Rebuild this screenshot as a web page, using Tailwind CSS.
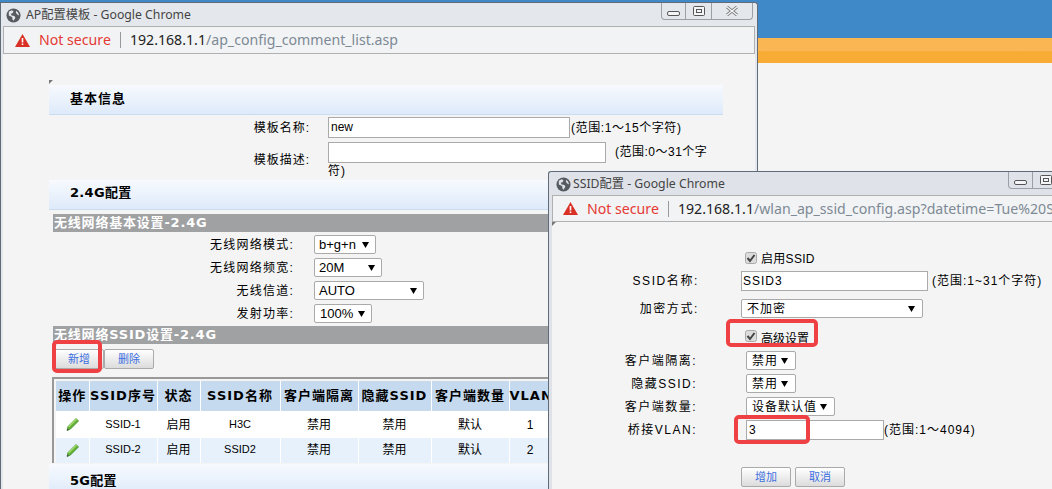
<!DOCTYPE html>
<html lang="zh">
<head>
  <meta charset="UTF-8">
  <title>AP配置模板</title>
  <script src="https://cdn.jsdelivr.net/npm/@tailwindcss/browser@4"></script>
</head>
<body class="relative w-[1052px] h-[489px] overflow-hidden bg-[#f4f4f4] text-[12px] text-black font-['Liberation_Sans','Noto_Sans_CJK_SC',sans-serif]">
  <!-- Page behind the popups -->
  <div class="h-[38px] bg-[#3f89c9]"></div>
  <div class="h-[25px] bg-linear-to-b from-[#f9b652] from-50% to-[#f8ac35] to-55%"></div>

  <!-- AP template window -->
  <div class="absolute left-0 top-[2px] w-[758px] h-[487px] flex flex-col overflow-hidden bg-[#e4e8ec] border-t border-x border-[#5f6b76] rounded-tr-[3px]">
    <div class="h-[23px] shrink-0 flex items-center relative pl-[5px] pt-[2px]">
      <svg class="w-[15px] h-[15px]" viewBox="0 0 16 16"><circle cx="8" cy="8" r="7.5" fill="#555b60"/><path d="M3 4l3-1.5 2 1-1 2-2 .5 1 2 3 .5 1 2-2 3-1-1-.5-3L3 8z M11 3l2 2 1 3-2-1-1.5-2z" fill="#e4e8ec"/></svg>
      <span class="ml-[5px] font-['Noto_Sans','Noto_Sans_CJK_SC',sans-serif] text-[12.25px] text-[#444]">AP配置模板 - Google Chrome</span>
      <div class="absolute right-[4px] top-0 w-[92px] h-[17px] flex border-x border-b border-[#9aa0a6] rounded-b-[4px]">
        <div class="w-[24px] border-r border-[#9aa0a6] flex items-end justify-center pb-[3px]"><svg width="13" height="5" viewBox="0 0 13 5"><rect x="0.5" y="0.5" width="12" height="4" rx="1.5" fill="#f4f5f6" stroke="#555"/></svg></div>
        <div class="w-[26px] border-r border-[#9aa0a6] flex items-center justify-center"><svg width="12" height="10" viewBox="0 0 12 10"><rect x="0.5" y="0.5" width="11" height="9" rx="1" fill="#f4f5f6" stroke="#555"/><rect x="3.5" y="3.5" width="5" height="3" fill="none" stroke="#555"/></svg></div>
        <div class="flex-1 flex items-center justify-center"><svg width="12" height="10" viewBox="0 0 12 10"><path d="M1 1l10 8M11 1L1 9" stroke="#777" stroke-width="3"/><path d="M1 1l10 8M11 1L1 9" stroke="#f4f5f6" stroke-width="1.5"/></svg></div>
      </div>
    </div>
    <div class="mx-[2px] h-[28px] shrink-0 flex items-center bg-[#f2f3f4] border border-[#aeb0b2] font-['Noto_Sans',sans-serif] text-[14.15px]">
      <svg class="ml-[11px] w-[15px] h-[13px]" viewBox="0 0 15 13"><path d="M7.5 0L15 13H0z" fill="#d93025"/><path d="M6.7 4h1.6v4.5H6.7zM6.7 9.5h1.6V11H6.7z" fill="#fff"/></svg>
      <span class="ml-[9px] text-[#e53935]">Not secure</span>
      <span class="ml-[9px] mr-[9px] w-px h-[16px] bg-[#999]"></span>
      <span class="text-[#222]">192.168.1.1</span><span class="text-[#7d8a96]">/ap_config_comment_list.asp</span>
    </div>
    <div class="flex-1 mx-[2px] bg-[#f4f4f4] pl-[46px] overflow-hidden">
      <div class="mt-[26px] h-0 w-0 border-t-[4px] border-r-[4px] border-t-[#777] border-r-transparent"></div>
      <div class="mt-[1px] w-[674px]">
        <h2 class="h-[30px] flex items-center pl-[21px] pb-[2px] bg-linear-to-b from-[#f7fafe] to-[#deeafa] border-b border-[#c9dcf2] font-['DejaVu_Sans','Noto_Sans_CJK_SC',sans-serif] font-bold text-[13px] tracking-[1px]">基本信息</h2>

        <div class="mt-[2px] grid grid-cols-[261px_1fr] gap-x-[18px] gap-y-[4px] items-center tracking-[1px]">
          <div class="text-right">模板名称:</div>
          <div class="flex items-center">
            <div class="w-[242px] h-[21px] leading-[19px] px-[2px] bg-white border border-[#aaa] tracking-normal">new</div>
            <span class="ml-[1px] tracking-[0.6px]">(范围:1～15个字符)</span>
          </div>
          <div class="text-right pb-[2px]">模板描述:</div>
          <div class="h-[38px] leading-[17px]">
            <div class="flex items-center">
              <div class="w-[278px] h-[21px] bg-white border border-[#aaa]"></div>
              <span class="ml-[9px] tracking-[0.5px]">(范围:0～31个字</span>
            </div>
            <div>符)</div>
          </div>
        </div>

        <h2 class="h-[30px] flex items-center pl-[21px] pb-[3px] bg-linear-to-b from-[#f7fafe] to-[#deeafa] border-b border-[#c9dcf2] font-['DejaVu_Sans','Noto_Sans_CJK_SC',sans-serif] font-bold text-[13px] tracking-[0.3px]">2.4G配置</h2>
        <h3 class="mt-[4px] ml-[4px] h-[18px] leading-[18px] pl-[1px] bg-[#9fa1a3] text-white font-['DejaVu_Sans','Noto_Sans_CJK_SC',sans-serif] font-bold text-[13px] tracking-[0.8px]">无线网络基本设置-2.4G</h3>

        <div class="mt-[3px] grid grid-cols-[245px_1fr] gap-x-[20px] gap-y-[4px] items-center tracking-[1.25px]">
          <div class="text-right">无线网络模式:</div>
          <div class="w-[62px] h-[19px] flex items-center justify-between pl-[4px] pr-[6px] bg-white border border-[#aaa] rounded-[2px] text-[13px] tracking-normal">b+g+n<svg width="7" height="6" viewBox="0 0 7 6"><path d="M0 0h7L3.5 6z"/></svg></div>
          <div class="text-right">无线网络频宽:</div>
          <div class="w-[68px] h-[19px] flex items-center justify-between pl-[4px] pr-[6px] bg-white border border-[#aaa] rounded-[2px] text-[13px] tracking-normal">20M<svg width="7" height="6" viewBox="0 0 7 6"><path d="M0 0h7L3.5 6z"/></svg></div>
          <div class="text-right">无线信道:</div>
          <div class="w-[110px] h-[19px] flex items-center justify-between pl-[4px] pr-[6px] bg-white border border-[#aaa] rounded-[2px] text-[13px] tracking-normal">AUTO<svg width="7" height="6" viewBox="0 0 7 6"><path d="M0 0h7L3.5 6z"/></svg></div>
          <div class="text-right">发射功率:</div>
          <div class="w-[58px] h-[19px] flex items-center justify-between pl-[5px] pr-[6px] bg-white border border-[#aaa] rounded-[2px] text-[13px] tracking-normal">100%<svg width="7" height="6" viewBox="0 0 7 6"><path d="M0 0h7L3.5 6z"/></svg></div>
        </div>

        <h3 class="mt-[3px] ml-[4px] h-[18px] leading-[18px] pl-[1px] bg-[#9fa1a3] text-white font-['DejaVu_Sans','Noto_Sans_CJK_SC',sans-serif] font-bold text-[13px] tracking-[0.8px]">无线网络SSID设置-2.4G</h3>

        <div class="mt-[5px] ml-[5px] flex text-[11px] text-[#3b6fe0]">
          <button class="w-[50px] h-[20px] bg-linear-to-b from-white to-[#dcdcdc] border border-[#aaa] rounded-[2px]">新增</button>
          <button class="w-[50px] h-[20px] bg-linear-to-b from-white to-[#dcdcdc] border border-[#aaa] rounded-[2px]">删除</button>
        </div>

        <div class="mt-[8px] ml-[3px] border-t-2 border-l-2 border-[#999] pt-[2px] pl-[2px]">
          <table class="table-fixed w-[640px] border-collapse text-center">
            <colgroup>
              <col class="w-[33px]"><col class="w-[68px]"><col class="w-[43px]"><col class="w-[80px]"><col class="w-[78px]"><col class="w-[73px]"><col class="w-[78px]"><col class="w-[42px]"><col>
            </colgroup>
            <thead class="font-['DejaVu_Sans','Noto_Sans_CJK_SC',sans-serif] text-[13px] tracking-[1px] whitespace-nowrap">
              <tr class="h-[30px] bg-[#c5daee]">
                <th class="border-r border-white font-bold">操作</th><th class="border-r border-white font-bold">SSID序号</th><th class="border-r border-white font-bold">状态</th><th class="border-r border-white font-bold">SSID名称</th><th class="border-r border-white font-bold">客户端隔离</th><th class="border-r border-white font-bold">隐藏SSID</th><th class="border-r border-white font-bold">客户端数量</th><th class="border-r border-white font-bold">VLAN</th><th class="font-bold"></th>
              </tr>
            </thead>
            <tbody>
              <tr class="h-[27px] bg-white">
                <td class="border-r border-white"><svg class="mx-auto" width="15" height="15" viewBox="0 0 15 15"><path d="M11 1.5l2.5 2.5-8 8L2 13.5 3 9.5z" fill="#5fb135" stroke="#3c8a20" stroke-width=".7"/><path d="M3 9.5L11 1.5l1 1-8 8z" fill="#a5dc6e"/><path d="M2 13.5l.6-2 1.4 1.4z" fill="#444"/></svg></td>
                <td class="border-r border-white text-[11px]">SSID-1</td><td class="border-r border-white">启用</td><td class="border-r border-white text-[11px]">H3C</td><td class="border-r border-white">禁用</td><td class="border-r border-white">禁用</td><td class="border-r border-white">默认</td><td class="border-r border-white">1</td><td></td>
              </tr>
              <tr class="h-[25px] bg-[#e6f1fb]">
                <td class="border-r border-white"><svg class="mx-auto" width="15" height="15" viewBox="0 0 15 15"><path d="M11 1.5l2.5 2.5-8 8L2 13.5 3 9.5z" fill="#5fb135" stroke="#3c8a20" stroke-width=".7"/><path d="M3 9.5L11 1.5l1 1-8 8z" fill="#a5dc6e"/><path d="M2 13.5l.6-2 1.4 1.4z" fill="#444"/></svg></td>
                <td class="border-r border-white text-[11px] pb-[2px]">SSID-2</td><td class="border-r border-white pb-[2px]">启用</td><td class="border-r border-white text-[11px] pb-[2px]">SSID2</td><td class="border-r border-white pb-[2px]">禁用</td><td class="border-r border-white pb-[2px]">禁用</td><td class="border-r border-white pb-[2px]">默认</td><td class="border-r border-white pb-[2px]">2</td><td></td>
              </tr>
            </tbody>
          </table>
        </div>

        <h2 class="mt-[1px] h-[30px] flex items-center pl-[21px] pt-[3px] bg-linear-to-b from-[#f7fafe] to-[#deeafa] font-['DejaVu_Sans','Noto_Sans_CJK_SC',sans-serif] font-bold text-[13px] tracking-[0.3px]">5G配置</h2>
      </div>
    </div>
  </div>

  <!-- SSID config window -->
  <div class="absolute left-[548px] top-[171px] w-[520px] h-[318px] flex flex-col overflow-hidden bg-[#dfe3e9] border-t border-l border-[#5f6b76] rounded-tl-[3px]">
    <div class="h-[23px] shrink-0 flex items-center relative pl-[7px] pt-[2px]">
      <svg class="w-[15px] h-[15px]" viewBox="0 0 16 16"><circle cx="8" cy="8" r="7.5" fill="#555b60"/><path d="M3 4l3-1.5 2 1-1 2-2 .5 1 2 3 .5 1 2-2 3-1-1-.5-3L3 8z M11 3l2 2 1 3-2-1-1.5-2z" fill="#dfe3e9"/></svg>
      <span class="ml-[2px] font-['Noto_Sans','Noto_Sans_CJK_SC',sans-serif] text-[12.25px] text-[#444]">SSID配置 - Google Chrome</span>
      <div class="absolute left-[459px] top-0 w-[60px] h-[17px] flex border-x border-b border-[#9aa0a6] rounded-bl-[4px]">
        <div class="w-[24px] border-r border-[#9aa0a6] flex items-end justify-center pb-[3px]"><svg width="13" height="5" viewBox="0 0 13 5"><rect x="0.5" y="0.5" width="12" height="4" rx="1.5" fill="#f4f5f6" stroke="#555"/></svg></div>
        <div class="w-[26px] flex items-center justify-center"><svg width="12" height="10" viewBox="0 0 12 10"><rect x="0.5" y="0.5" width="11" height="9" rx="1" fill="#f4f5f6" stroke="#555"/><rect x="3.5" y="3.5" width="5" height="3" fill="none" stroke="#555"/></svg></div>
      </div>
    </div>
    <div class="ml-[3px] h-[27px] shrink-0 flex items-center bg-[#f2f3f4] border-y border-l border-[#aeb0b2] font-['Noto_Sans',sans-serif] text-[14.15px] whitespace-nowrap overflow-hidden">
      <svg class="ml-[10px] w-[15px] h-[13px] shrink-0" viewBox="0 0 15 13"><path d="M7.5 0L15 13H0z" fill="#d93025"/><path d="M6.7 4h1.6v4.5H6.7zM6.7 9.5h1.6V11H6.7z" fill="#fff"/></svg>
      <span class="ml-[9px] text-[#e53935]">Not secure</span>
      <span class="ml-[9px] mr-[9px] w-px h-[16px] shrink-0 bg-[#999]"></span>
      <span class="text-[#222]">192.168.1.1</span><span class="text-[#7d8a96]">/wlan_ap_ssid_config.asp?datetime=Tue%20Sep</span>
    </div>
    <div class="flex-1 ml-[3px] bg-[#f4f4f4] tracking-[1px]">
      <div class="h-0 w-0 border-t-[4px] border-r-[4px] border-t-[#777] border-r-transparent"></div>
      <div class="mt-[24px] grid grid-cols-[147px_1fr] gap-x-[42px] items-center">
        <div></div>
        <div class="h-[16px] ml-[4px] flex items-center"><svg width="12" height="12" viewBox="0 0 12 12"><rect x="0.5" y="0.5" width="11" height="11" rx="2" fill="#dcdcdc" stroke="#aaa"/><path d="M2.5 6l2.5 3 4.5-6" fill="none" stroke="#444" stroke-width="2"/></svg><span class="ml-[4px] mt-[2px] tracking-[0.3px]">启用SSID</span></div>

        <div class="mt-[5px] text-right tracking-[1.6px]">SSID名称:</div>
        <div class="mt-[5px] flex items-center">
          <div class="w-[187px] h-[20px] leading-[18px] px-[1px] bg-white border border-[#aaa]">SSID3</div>
          <span class="ml-[4px]">(范围:1~31个字符)</span>
        </div>

        <div class="mt-[8px] text-right tracking-[1.6px]">加密方式:</div>
        <div class="mt-[8px] w-[182px] h-[19px] flex items-center justify-between pl-[5px] pr-[7px] bg-white border border-[#aaa] rounded-[2px]">不加密<svg width="7" height="6" viewBox="0 0 7 6"><path d="M0 0h7L3.5 6z"/></svg></div>

        <div class="mt-[10px]"></div>
        <div class="mt-[10px] h-[16px] ml-[4px] flex items-center"><svg width="12" height="12" viewBox="0 0 12 12"><rect x="0.5" y="0.5" width="11" height="11" rx="2" fill="#dcdcdc" stroke="#aaa"/><path d="M2.5 6l2.5 3 4.5-6" fill="none" stroke="#444" stroke-width="2"/></svg><span class="ml-[4px] mt-[6px] tracking-normal">高级设置</span></div>

        <div class="mt-[7px] text-right pr-[2px] tracking-[1.5px]">客户端隔离:</div>
        <div class="mt-[7px] ml-[5px] w-[50px] h-[19px] flex items-center justify-between pl-[5px] pr-[7px] bg-white border border-[#aaa] rounded-[2px]">禁用<svg width="7" height="6" viewBox="0 0 7 6"><path d="M0 0h7L3.5 6z"/></svg></div>

        <div class="mt-[4px] text-right pr-[2px] tracking-[1.5px]">隐藏SSID:</div>
        <div class="mt-[4px] ml-[5px] w-[50px] h-[19px] flex items-center justify-between pl-[5px] pr-[7px] bg-white border border-[#aaa] rounded-[2px]">禁用<svg width="7" height="6" viewBox="0 0 7 6"><path d="M0 0h7L3.5 6z"/></svg></div>

        <div class="mt-[4px] text-right pr-[2px] tracking-[1.5px]">客户端数量:</div>
        <div class="mt-[4px] ml-[5px] w-[89px] h-[19px] flex items-center justify-between pl-[5px] pr-[7px] bg-white border border-[#aaa] rounded-[2px]">设备默认值<svg width="7" height="6" viewBox="0 0 7 6"><path d="M0 0h7L3.5 6z"/></svg></div>

        <div class="mt-[4px] text-right pr-[2px] tracking-[1.5px]">桥接VLAN:</div>
        <div class="mt-[4px] ml-[5px] flex items-center">
          <div class="w-[138px] h-[20px] leading-[18px] px-[2px] bg-white border border-[#aaa]">3</div>
          <span>(范围:1～4094)</span>
        </div>

        <div class="col-start-2 mt-[27px] flex gap-[4px] text-[11px] tracking-normal text-[#3b6fe0]">
          <button class="w-[50px] h-[20px] bg-linear-to-b from-white to-[#dcdcdc] border border-[#aaa] rounded-[2px]">增加</button>
          <button class="w-[50px] h-[20px] bg-linear-to-b from-white to-[#dcdcdc] border border-[#aaa] rounded-[2px]">取消</button>
        </div>
      </div>
    </div>
  </div>

  <!-- Red annotation boxes -->
  <div class="absolute left-[52px] top-[340px] w-[50px] h-[33px] border-4 border-[#ef4044] rounded-[5px]"></div>
  <div class="absolute left-[726px] top-[319px] w-[92px] h-[28px] border-4 border-[#ef4044] rounded-[5px]"></div>
  <div class="absolute left-[734px] top-[415px] w-[76px] h-[29px] border-4 border-[#ef4044] rounded-[5px]"></div>
</body>
</html>
